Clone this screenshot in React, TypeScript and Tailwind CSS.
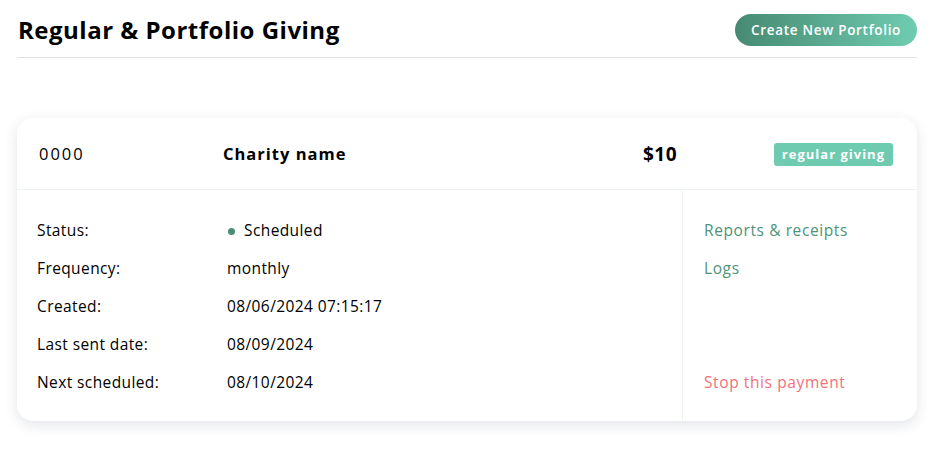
const rows = [
  { label: "Status:", value: "Scheduled", dot: true },
  { label: "Frequency:", value: "monthly" },
  { label: "Created:", value: "08/06/2024 07:15:17" },
  { label: "Last sent date:", value: "08/09/2024" },
  { label: "Next scheduled:", value: "08/10/2024" },
];

export default function App() {
  return (
    <div className="min-h-[458px] bg-white font-['Open_Sans',sans-serif] text-black">
      <div className="w-[900px] ml-[17px]">
        {/* Header */}
        <div className="flex items-center justify-between pt-[14px] pb-[11px] border-b border-[#e2e2e2]">
          <h1 className="pl-px text-[24px] font-bold leading-8 tracking-[0.5px]">
            Regular &amp; Portfolio Giving
          </h1>
          <button className="h-8 w-[182px] rounded-full bg-gradient-to-r from-[#478a73] to-[#6fccb0] text-[13.5px] font-semibold tracking-[0.7px] text-white">
            Create New Portfolio
          </button>
        </div>

        {/* Card */}
        <div className="mt-[60px] rounded-2xl bg-white shadow-[0_4px_14px_rgba(30,50,80,0.13)]">
          <div className="flex items-center h-[72px] pt-[2px] pl-[22px] pr-6 border-b border-[#eef5ef]">
            <div className="w-[184px] text-[16.5px] tracking-[2px]">0000</div>
            <div className="w-[380px] text-[16.5px] font-bold tracking-[1px]">Charity name</div>
            <div className="w-[74px] text-[19px] font-bold tracking-[0.5px] text-right">$10</div>
            <div className="ml-auto rounded-[3px] bg-[#6fcbaf] px-2 py-[2px] text-[13px] font-bold tracking-[1px] text-white">
              regular giving
            </div>
          </div>
          <div className="flex">
            <div className="w-[666px] border-r border-[#eef5ef] pl-5 pt-[22px] pb-[19px]">
              {rows.map((r) => (
                <div key={r.label} className="flex items-center h-[38px] text-[15.5px] tracking-[0.4px]">
                  <div className="w-[190px]">{r.label}</div>
                  <div className="flex items-center">
                    {r.dot && <span className="ml-[1px] mr-[9px] h-[7px] w-[7px] rounded-full bg-[#4a8c76]" />}
                    {r.value}
                  </div>
                </div>
              ))}
            </div>
            <div className="flex-1 flex flex-col pl-[21px] pt-[22px] pb-[19px] text-[15.5px] tracking-[0.6px]">
              <div className="h-[38px] flex items-center text-[#4e9478]">Reports &amp; receipts</div>
              <div className="h-[38px] flex items-center text-[#4e9478]">Logs</div>
              <div className="flex-1" />
              <div className="h-[38px] flex items-center text-[#f1717b]">Stop this payment</div>
            </div>
          </div>
        </div>
      </div>
    </div>
  );
}
